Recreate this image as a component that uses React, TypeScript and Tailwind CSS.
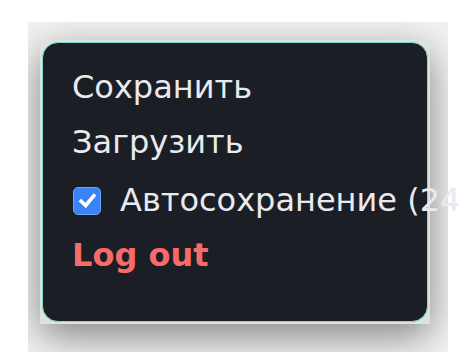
export default function App() {
  return (
    <div className="w-[470px] h-[360px] bg-white pl-[28px] pt-[22px]" style={{ fontFamily: '"DejaVu Sans", sans-serif' }}>
      <div className="relative w-[420px] h-[330px] bg-[#f1f1f1]">
        {/* clipped drop shadow */}
        <div className="absolute inset-0 overflow-hidden">
          <div className="absolute left-[14px] top-[20px] w-[386px] h-[280px] rounded-[16px] shadow-[0_12px_36px_4px_rgba(0,0,0,0.42)]" />
        </div>
        <div className="relative pl-[12px] pt-[18px]">
          <div className="w-[390px] h-[284px] bg-[#dde1df] p-[2px]">
            <div className="w-[386px] h-[280px] rounded-[16px] border border-[#7fdcc0] bg-[#1b1e25] pl-[29px] pt-[26px] flex flex-col gap-[18px] text-[32px] text-[#e8eaf0]">
              <div className="leading-[37px]">Сохранить</div>
              <div className="leading-[37px]">Загрузить</div>
              <div className="flex items-center gap-[19px] leading-[37px] whitespace-nowrap mt-[3px]">
                <span className="shrink-0 w-[28px] h-[28px] ml-[1px] rounded-[5px] bg-[#3b82f6] border border-[#6aa3fa] flex items-center justify-center">
                  <svg viewBox="0 0 16 16" className="w-[21px] h-[21px]">
                    <path d="M3.2 8.6 L6.6 11.8 L12.8 4.4" fill="none" stroke="white" strokeWidth="2.8" strokeLinecap="square" />
                  </svg>
                </span>
                <span>Автосохранение (24</span>
              </div>
              <div className="leading-[37px] font-bold text-[#f76b6b]">Log out</div>
            </div>
          </div>
        </div>
      </div>
    </div>
  );
}
